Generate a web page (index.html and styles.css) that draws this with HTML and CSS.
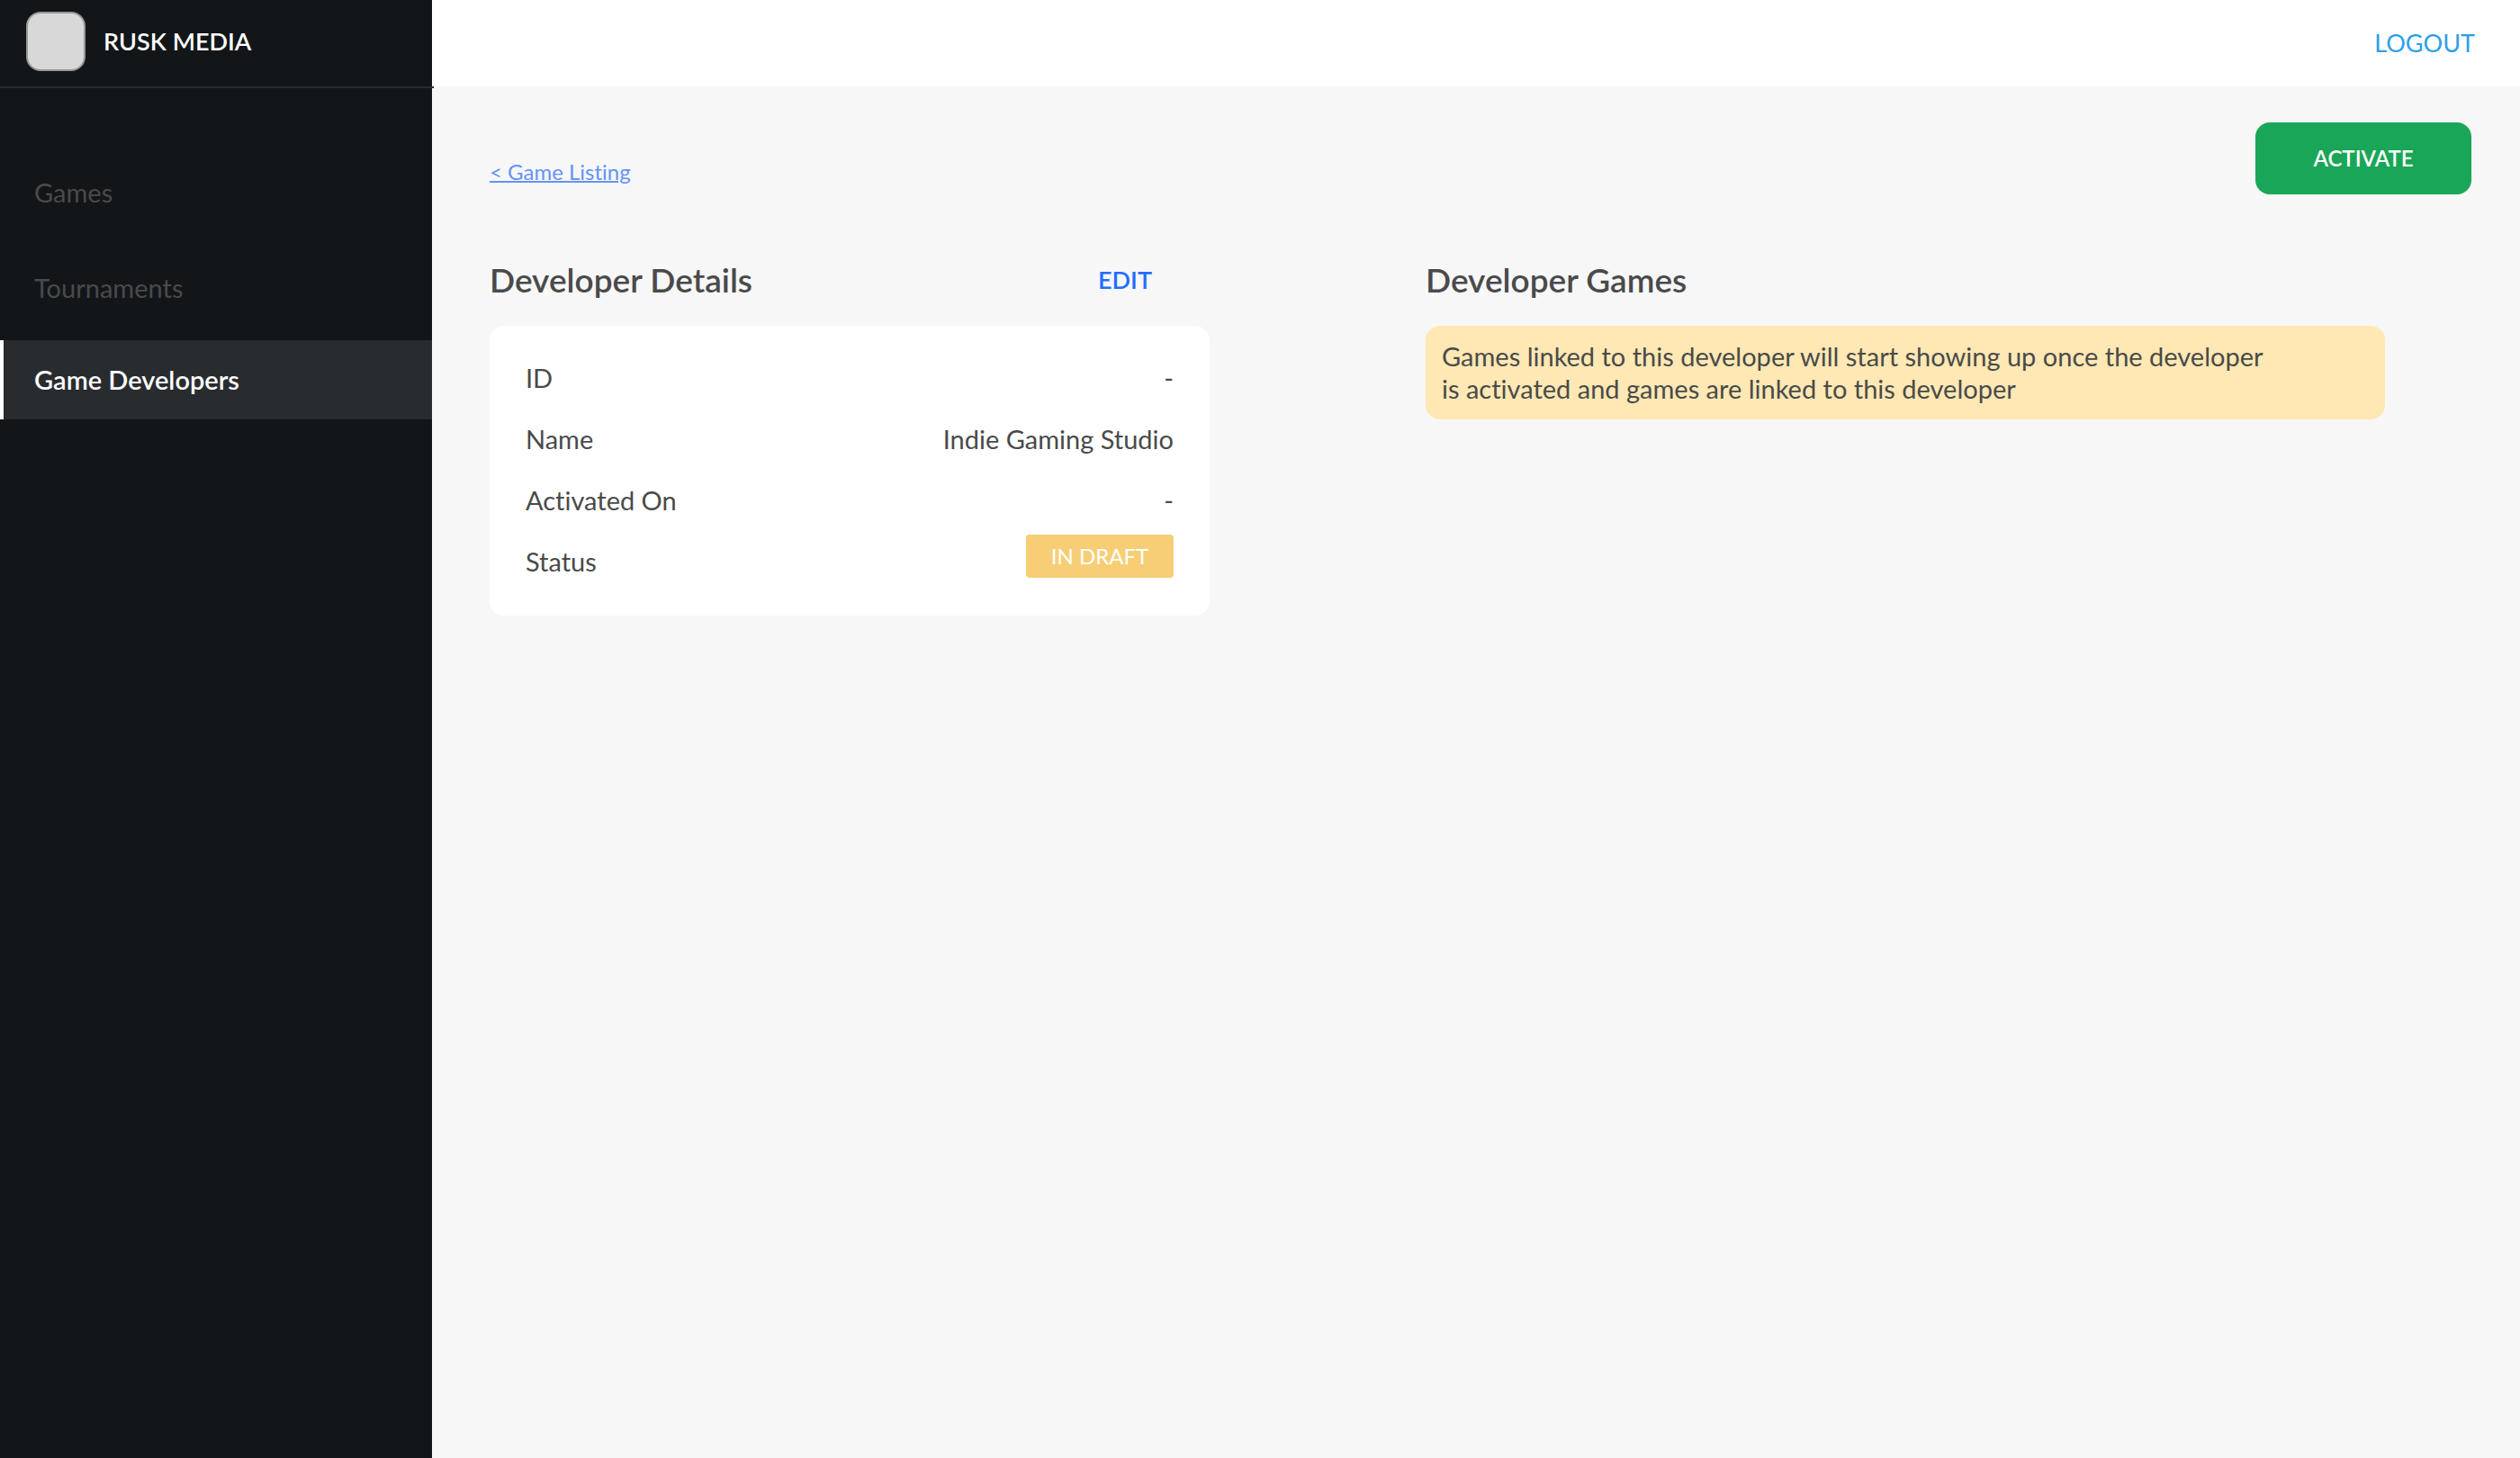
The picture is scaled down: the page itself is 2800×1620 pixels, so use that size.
FILE: index.html
```html
<!DOCTYPE html>
<html lang="en">
<head>
<meta charset="utf-8">
<meta name="viewport" content="width=device-width, initial-scale=1">
<title>Rusk Media – Developer Details</title>
<link rel="stylesheet" href="styles.css">
</head>
<body>
<div class="app">
  <aside class="sidebar">
    <div class="brand">
      <span class="brand-logo"></span>
      <span class="brand-name">RUSK MEDIA</span>
    </div>
    <nav class="nav">
      <a class="nav-link" href="#games">Games</a>
      <a class="nav-link" href="#tournaments">Tournaments</a>
      <a class="nav-link nav-link-active" href="#developers" aria-current="page">Game Developers</a>
    </nav>
  </aside>
  <div class="content">
    <header class="topbar">
      <a class="logout" href="#logout">LOGOUT</a>
    </header>
    <main class="main">
      <div class="toolbar">
        <a class="back-link" href="#games">&lt; Game Listing</a>
        <button class="activate" type="button">ACTIVATE</button>
      </div>
      <div class="columns">
        <section>
          <div class="section-head">
            <h2 class="section-title">Developer Details</h2>
            <button class="edit" type="button">EDIT</button>
          </div>
          <dl class="card">
            <div class="row"><dt>ID</dt><dd>-</dd></div>
            <div class="row"><dt>Name</dt><dd>Indie Gaming Studio</dd></div>
            <div class="row"><dt>Activated On</dt><dd>-</dd></div>
            <div class="row"><dt>Status</dt><dd class="status"><span class="badge">IN DRAFT</span></dd></div>
          </dl>
        </section>
        <section>
          <div class="section-head">
            <h2 class="section-title">Developer Games</h2>
          </div>
          <p class="notice">Games linked to this developer will start showing up once the developer<br>is activated and games are linked to this developer</p>
        </section>
      </div>
    </main>
  </div>
</div>
</body>
</html>
```
FILE: styles.css
```css
* {
  box-sizing: border-box;
}

body {
  margin: 0;
  background: #f7f7f7;
  color: #4a4a4a;
  font-family: Lato, "Open Sans", sans-serif;
  font-size: 29px;
  font-variant-ligatures: none;
  line-height: 36px;
}

h2, p, dl, dd {
  margin: 0;
}

button {
  border: 0;
  padding: 0;
  background: none;
  font: inherit;
  cursor: pointer;
}

.app {
  display: flex;
  min-height: 100vh;
}

/* Sidebar */
.sidebar {
  flex: 0 0 480px;
  min-width: 0;
  background: #121619;
}

.brand {
  display: flex;
  align-items: center;
  gap: 20px;
  height: 98px;
  margin-right: -2px;
  padding: 0 29px 4px;
  border-bottom: 2px solid #292c2f;
}

.brand-logo {
  width: 66px;
  height: 66px;
  border: 2px solid #979797;
  border-radius: 16px;
  background: #d8d8d8;
}

.brand-name {
  color: #fff;
  font-size: 27px;
  font-weight: 600;
}

.nav {
  display: flex;
  flex-direction: column;
  gap: 10px;
  padding-top: 68px;
}

.nav-link {
  display: flex;
  align-items: center;
  height: 96px;
  padding-left: 38px;
  color: #4a4a4a;
  text-decoration: none;
}

.nav-link-active {
  height: 88px;
  padding-left: 34px;
  border-left: 4px solid #fff;
  background: #292c2f;
  color: #fff;
  font-weight: 600;
}

/* Content */
.content {
  flex: 1;
  min-width: 0;
}

.topbar {
  display: flex;
  align-items: center;
  justify-content: flex-end;
  height: 96px;
  padding-right: 50px;
  background: #fff;
}

.logout {
  color: #2ca0e8;
  font-size: 27px;
  text-decoration: none;
}

.main {
  padding: 40px 54px 40px 64px;
}

.toolbar {
  display: flex;
  align-items: flex-end;
  justify-content: space-between;
  height: 80px;
}

.back-link {
  margin-bottom: 7px;
  color: #6493f7;
  font-size: 24px;
  text-decoration-thickness: 2px;
}

.activate {
  width: 240px;
  height: 80px;
  border-radius: 16px;
  background: #1aa658;
  color: #fff;
  font-size: 24px;
  font-weight: 600;
}

.columns {
  display: grid;
  grid-template-columns: minmax(0, 800px) minmax(0, 1066px);
  gap: 240px;
  padding-top: 72px;
}

.section-head {
  display: flex;
  align-items: center;
  justify-content: space-between;
  height: 46px;
  margin-bottom: 28px;
  padding-right: 64px;
}

.section-title {
  font-size: 37px;
  font-weight: 600;
}

.edit {
  color: #1f6fff;
  font-size: 27px;
  font-weight: 600;
}

.card {
  padding: 24px 40px 26px;
  border-radius: 16px;
  background: #fff;
}

.row {
  display: flex;
  align-items: center;
  justify-content: space-between;
  height: 68px;
}

.status {
  align-self: flex-start;
  padding-top: 4px;
}

.badge {
  display: block;
  width: 164px;
  border-radius: 4px;
  background: #f7ce76;
  color: #fff;
  font-size: 24px;
  line-height: 48px;
  text-align: center;
}

.notice {
  padding: 16px 18px;
  border-radius: 16px;
  background: #ffe8b3;
}
```
